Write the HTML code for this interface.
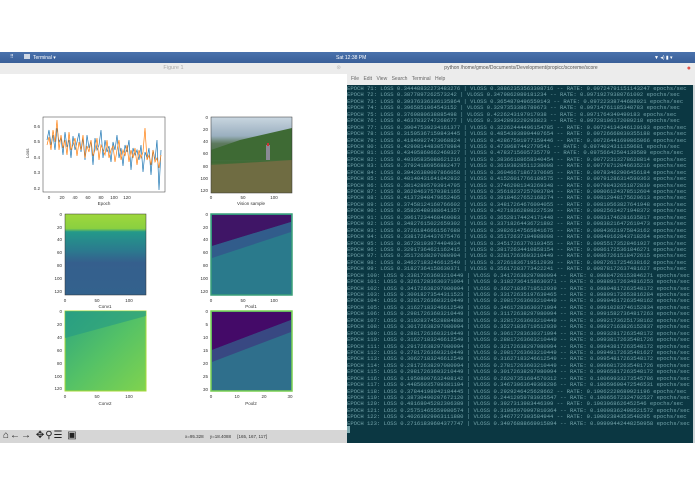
<!DOCTYPE html>
<html><head><meta charset="utf-8"><style>
*{margin:0;padding:0;box-sizing:border-box}
body{width:695px;height:494px;background:#fff;position:relative;overflow:hidden;font-family:"Liberation Sans",sans-serif}
.abs{position:absolute}
#topbar{left:0;top:52px;width:695px;height:11px;background:linear-gradient(#4a72ad,#3a5f98);color:#fff;font-size:5px}
#figtitle{left:0;top:63px;width:347px;height:11px;background:#ececec;color:#aaa;font-size:5.5px;text-align:center;line-height:11px}
#fig{left:0;top:74px;width:345px;height:356px;background:#fff}
#tb{left:0;top:430px;width:347px;height:13px;background:#d6d6d6;font-size:4.5px;color:#333}
#termtitle{left:347px;top:63px;width:348px;height:11px;background:#ececec;color:#555;font-size:5px;text-align:center;line-height:11px}
#menu{left:347px;top:74px;width:348px;height:11px;background:#ececec;color:#666;font-size:5px;line-height:11px;padding-left:4px;word-spacing:3px}
#term{left:347px;top:85px;width:346px;height:358px;background:#0b3742;color:#73a3aa;font-family:"Liberation Mono",monospace;font-size:5.55px;line-height:6.44px;white-space:pre;overflow:hidden;padding-top:1px}
</style></head><body>
<div id="topbar" class="abs"><span style="position:absolute;left:10px;top:2px">⠿</span><span style="position:absolute;left:24px;top:2px;width:6px;height:5px;background:#cfd8e6"></span><span style="position:absolute;left:33px;top:3px">Terminal ▾</span><span style="position:absolute;left:336px;top:3px">Sat 12:38 PM</span><span style="position:absolute;left:654px;top:3px">▼ ◂) ▮ ▾</span></div>
<div id="figtitle" class="abs">Figure 1<span style="position:absolute;right:6px;color:#bbb">⊗</span></div>
<div id="termtitle" class="abs">python /home/gmoe/Documents/Development/propicc/scoreme/score<span style="position:absolute;right:4px;color:#e0524a;font-size:7px">●</span></div>
<div id="menu" class="abs">File Edit View Search Terminal Help</div>
<svg id="fig" class="abs" width="345" height="356" viewBox="0 74 345 356" font-family="Liberation Sans" font-size="4.5" fill="#333">
<defs>
<linearGradient id="c1" x1="0" y1="0" x2="0" y2="1"><stop offset="0" stop-color="#9fd83c"/><stop offset=".18" stop-color="#8ad040"/><stop offset=".22" stop-color="#23998a"/><stop offset=".45" stop-color="#2b7a8e"/><stop offset=".6" stop-color="#355f8d"/><stop offset="1" stop-color="#33628d"/></linearGradient>
<linearGradient id="c2" x1="0" y1="0" x2="1" y2="1"><stop offset="0" stop-color="#2fa67e"/><stop offset=".5" stop-color="#55c266"/><stop offset="1" stop-color="#80d34e"/></linearGradient>
<linearGradient id="vs" x1="0" y1="0" x2="0" y2="1"><stop offset="0" stop-color="#c9d6e0"/><stop offset=".25" stop-color="#9aafbf"/><stop offset=".35" stop-color="#5d7a5e"/><stop offset=".6" stop-color="#3f6a35"/><stop offset=".7" stop-color="#7b7a4a"/><stop offset="1" stop-color="#6e6a40"/></linearGradient>
</defs>
<rect x="43" y="117" width="122" height="75" fill="#fff" stroke="#333" stroke-width=".5"/>
<polyline fill="none" stroke="#1f77b4" stroke-width=".7" points="47,140 49,130 51,145 53,135 55,150 57,128 59,142 61,138 63,155 65,132 67,147 69,140 71,158 73,136 75,150 77,142 79,133 81,152 83,138 85,160 87,135 89,148 91,141 93,165 95,138 97,150 99,145 101,130 103,158 105,140 107,152 109,146 111,162 113,142 115,150 117,135 119,158 121,148 123,166 125,145 127,152 129,140 131,170 133,148 135,155 137,150 139,160 141,145 143,172 145,152 147,158 149,148 151,175 153,150 155,160 157,140 159,190 161,150"/>
<polyline fill="none" stroke="#ff7f0e" stroke-width=".7" points="47,145 49,137 51,150 53,130 55,142 57,120 59,150 61,135 63,148 65,140 67,155 69,132 71,150 73,145 75,138 77,156 79,142 81,150 83,135 85,158 87,146 89,152 91,140 93,156 95,150 97,138 99,160 101,145 103,150 105,155 107,140 109,158 111,150 113,146 115,162 117,150 119,140 121,160 123,150 125,156 127,145 129,162 131,150 133,158 135,148 137,165 139,150 141,158 143,152 145,128 147,160 149,155 151,165 153,150 155,162 157,158 159,168 161,155"/>
<text x="40" y="128" text-anchor="end">0.6</text><text x="40" y="143" text-anchor="end">0.5</text><text x="40" y="159" text-anchor="end">0.4</text><text x="40" y="174" text-anchor="end">0.3</text><text x="40" y="190" text-anchor="end">0.2</text>
<text x="29" y="158" transform="rotate(-90 29 158)">Loss</text>
<text x="49" y="199" text-anchor="middle">0</text><text x="62" y="199" text-anchor="middle">20</text><text x="75" y="199" text-anchor="middle">40</text><text x="88" y="199" text-anchor="middle">60</text><text x="101" y="199" text-anchor="middle">80</text><text x="114" y="199" text-anchor="middle">100</text><text x="127" y="199" text-anchor="middle">120</text>
<text x="104" y="205" text-anchor="middle">Epoch</text>
<rect x="211" y="117" width="81" height="76" fill="url(#vs)"/>
<path d="M211,150 L240,140 L292,128 L292,160 L211,160Z" fill="#3e6a34"/>
<path d="M211,165 L292,160 L292,193 L211,193Z" fill="#6f6c42"/>
<rect x="266" y="145" width="4" height="15" fill="#8a8a95"/>
<rect x="267" y="143" width="2" height="3" fill="#c33"/>
<rect x="211" y="117" width="81" height="76" fill="none" stroke="#333" stroke-width=".5"/>
<text x="208" y="119" text-anchor="end">0</text><text x="208" y="131" text-anchor="end">20</text><text x="208" y="143" text-anchor="end">40</text><text x="208" y="155" text-anchor="end">60</text><text x="208" y="168" text-anchor="end">80</text><text x="208" y="180" text-anchor="end">100</text><text x="208" y="192" text-anchor="end">120</text>
<text x="211" y="199" text-anchor="middle">0</text><text x="243" y="199" text-anchor="middle">50</text><text x="274" y="199" text-anchor="middle">100</text>
<text x="251" y="205" text-anchor="middle">Vision sample</text>
<rect x="65" y="214" width="81" height="81" fill="url(#c1)" stroke="#333" stroke-width=".5"/>
<text x="62" y="216" text-anchor="end">0</text><text x="62" y="229" text-anchor="end">20</text><text x="62" y="241" text-anchor="end">40</text><text x="62" y="254" text-anchor="end">60</text><text x="62" y="267" text-anchor="end">80</text><text x="62" y="280" text-anchor="end">100</text><text x="62" y="293" text-anchor="end">120</text>
<text x="65" y="302" text-anchor="middle">0</text><text x="97" y="302" text-anchor="middle">50</text><text x="129" y="302" text-anchor="middle">100</text>
<text x="105" y="308" text-anchor="middle">Conv1</text>
<rect x="211" y="214" width="81" height="81" fill="#2a7a8c" stroke="#3aa07a" stroke-width="1.5"/>
<path d="M212,215 L291,215 L291,222 L212,246Z" fill="#3f1566"/>
<path d="M212,246 L291,222 L291,232 L212,258Z" fill="#34508a" opacity=".7"/>
<text x="208" y="216" text-anchor="end">0</text><text x="208" y="229" text-anchor="end">20</text><text x="208" y="241" text-anchor="end">40</text><text x="208" y="254" text-anchor="end">60</text><text x="208" y="267" text-anchor="end">80</text><text x="208" y="280" text-anchor="end">100</text><text x="208" y="293" text-anchor="end">120</text>
<text x="211" y="302" text-anchor="middle">0</text><text x="243" y="302" text-anchor="middle">50</text><text x="274" y="302" text-anchor="middle">100</text>
<text x="251" y="308" text-anchor="middle">Pool1</text>
<rect x="65" y="311" width="81" height="80" fill="url(#c2)" stroke="#a7d93a" stroke-width="1"/>
<path d="M65,311 L146,311 L146,316 L65,338Z" fill="#249a86" opacity=".6"/>
<text x="62" y="313" text-anchor="end">0</text><text x="62" y="326" text-anchor="end">20</text><text x="62" y="339" text-anchor="end">40</text><text x="62" y="352" text-anchor="end">60</text><text x="62" y="365" text-anchor="end">80</text><text x="62" y="378" text-anchor="end">100</text><text x="62" y="390" text-anchor="end">120</text>
<text x="65" y="398" text-anchor="middle">0</text><text x="97" y="398" text-anchor="middle">50</text><text x="129" y="398" text-anchor="middle">100</text>
<text x="105" y="405" text-anchor="middle">Conv2</text>
<rect x="211" y="311" width="81" height="80" fill="#2f6f8c" stroke="#7ad151" stroke-width="1.5"/>
<path d="M212,312 L291,312 L291,320 L212,350Z" fill="#440a68"/>
<path d="M212,350 L291,320 L291,332 L212,362Z" fill="#3b3f80" opacity=".8"/>
<text x="208" y="313" text-anchor="end">0</text><text x="208" y="326" text-anchor="end">5</text><text x="208" y="339" text-anchor="end">10</text><text x="208" y="352" text-anchor="end">15</text><text x="208" y="365" text-anchor="end">20</text><text x="208" y="378" text-anchor="end">25</text><text x="208" y="391" text-anchor="end">30</text>
<text x="211" y="398" text-anchor="middle">0</text><text x="237" y="398" text-anchor="middle">10</text><text x="264" y="398" text-anchor="middle">20</text><text x="290" y="398" text-anchor="middle">30</text>
<text x="251" y="405" text-anchor="middle">Pool2</text>
</svg>
<div id="tb" class="abs"><span style="position:absolute;left:3px;top:0px;font-size:10px;color:#222;letter-spacing:1px">⌂←→ ✥⚲☰ ▣</span><span style="position:absolute;left:185px;top:4px">x=95.328&nbsp;&nbsp;&nbsp;&nbsp; y=18.4088&nbsp;&nbsp;&nbsp;&nbsp; [165, 167, 117]</span></div>
<div id="term" class="abs">EPOCH 71: LOSS 0.34448832273483276 | VLOSS 0.38862353563308716 -- RATE: 0.09724791151143247 epochs/sec
EPOCH 72: LOSS 0.3877897262573242 | VLOSS 0.3479862089181234 -- RATE: 0.09719279380761092 epochs/sec
EPOCH 73: LOSS 0.39376336336135864 | VLOSS 0.3654870496559143 -- RATE: 0.09722338744688921 epochs/sec
EPOCH 74: LOSS 0.3965851064543152 | VLOSS 0.3297353386789673 -- RATE: 0.09714761185348783 epochs/sec
EPOCH 75: LOSS 0.3769880638885498 | VLOSS 0.4226243197917938 -- RATE: 0.0971764349499183 epochs/sec
EPOCH 76: LOSS 0.4637832747268677 | VLOSS 0.3342893229293823 -- RATE: 0.09728106172089218 epochs/sec
EPOCH 77: LOSS 0.39047539234161377 | VLOSS 0.32262444496154785 -- RATE: 0.09724134346120193 epochs/sec
EPOCH 78: LOSS 0.31505367159843445 | VLOSS 0.48543938994407654 -- RATE: 0.09726668030355188 epochs/sec
EPOCH 79: LOSS 0.41849927473068824 | VLOSS 0.42867591977159446 -- RATE: 0.09726441699865066 epochs/sec
EPOCH 80: LOSS 0.42998144830578984 | VLOSS 0.4739687442779541 -- RATE: 0.0974024311159681 epochs/sec
EPOCH 81: LOSS 0.43405860662460327 | VLOSS 0.4783715605735779 -- RATE: 0.09756642504139589 epochs/sec
EPOCH 82: LOSS 0.40305835088621216 | VLOSS 0.38366188658340454 -- RATE: 0.09772313278628814 epochs/sec
EPOCH 83: LOSS 0.37924186956882477 | VLOSS 0.36193828511238098 -- RATE: 0.09778712046635216 epochs/sec
EPOCH 84: LOSS 0.39426380097866058 | VLOSS 0.36046671867370605 -- RATE: 0.09783462906456184 epochs/sec
EPOCH 85: LOSS 0.40140431641042932 | VLOSS 0.41526017766189575 -- RATE: 0.09791286314590363 epochs/sec
EPOCH 86: LOSS 0.38142895793914795 | VLOSS 0.37462981343269348 -- RATE: 0.09798432651872839 epochs/sec
EPOCH 87: LOSS 0.36284637570381165 | VLOSS 0.35618237257003784 -- RATE: 0.09806124378512604 epochs/sec
EPOCH 88: LOSS 0.41372948479652405 | VLOSS 0.39184627652168274 -- RATE: 0.09812948175620613 epochs/sec
EPOCH 89: LOSS 0.37458124160766602 | VLOSS 0.34817264676094055 -- RATE: 0.09819563827641948 epochs/sec
EPOCH 90: LOSS 0.35826480388641357 | VLOSS 0.42718362808227539 -- RATE: 0.09825614271948372 epochs/sec
EPOCH 91: LOSS 0.39617234468460083 | VLOSS 0.36528174424171448 -- RATE: 0.09831746281635817 epochs/sec
EPOCH 92: LOSS 0.34827615022659302 | VLOSS 0.33718264436721802 -- RATE: 0.09838216472619473 epochs/sec
EPOCH 93: LOSS 0.37261846661567688 | VLOSS 0.39826147565841675 -- RATE: 0.09843621975843162 epochs/sec
EPOCH 94: LOSS 0.33817264437675476 | VLOSS 0.35172637104988098 -- RATE: 0.09849162843718264 epochs/sec
EPOCH 95: LOSS 0.36728193974494934 | VLOSS 0.34517263770103455 -- RATE: 0.09855173528461927 epochs/sec
EPOCH 96: LOSS 0.32917364621162415 | VLOSS 0.38172634410858154 -- RATE: 0.09861725361846271 epochs/sec
EPOCH 97: LOSS 0.35172638297080994 | VLOSS 0.32817263603210449 -- RATE: 0.09867261518472615 epochs/sec
EPOCH 98: LOSS 0.34627183246612549 | VLOSS 0.37261836719512939 -- RATE: 0.09872617254638162 epochs/sec
EPOCH 99: LOSS 0.31827364158630371 | VLOSS 0.35617283773422241 -- RATE: 0.09878172637481627 epochs/sec
EPOCH 100: LOSS 0.33817263603210449 | VLOSS 0.34172638297080994 -- RATE: 0.09884726153846271 epochs/sec
EPOCH 101: LOSS 0.32617283630371094 | VLOSS 0.31827364158630371 -- RATE: 0.09889172634816253 epochs/sec
EPOCH 102: LOSS 0.34172638297080994 | VLOSS 0.36271836719512939 -- RATE: 0.09894817263548172 epochs/sec
EPOCH 103: LOSS 0.30918273544311523 | VLOSS 0.33172635197639465 -- RATE: 0.09899172653816284 epochs/sec
EPOCH 104: LOSS 0.32817263603210449 | VLOSS 0.29817263603210449 -- RATE: 0.09904617263548162 epochs/sec
EPOCH 105: LOSS 0.31627183246612549 | VLOSS 0.34617283630371094 -- RATE: 0.09910283746152834 epochs/sec
EPOCH 106: LOSS 0.29817263603210449 | VLOSS 0.31172638297080994 -- RATE: 0.09915827364817263 epochs/sec
EPOCH 107: LOSS 0.31928374528884888 | VLOSS 0.32817263603210449 -- RATE: 0.09921736251738162 epochs/sec
EPOCH 108: LOSS 0.30172638297080994 | VLOSS 0.35271836719512939 -- RATE: 0.09927163826152837 epochs/sec
EPOCH 109: LOSS 0.28817263603210449 | VLOSS 0.30617283630371094 -- RATE: 0.09932817263548172 epochs/sec
EPOCH 110: LOSS 0.31627183246612549 | VLOSS 0.28817263603210449 -- RATE: 0.09938172635481726 epochs/sec
EPOCH 111: LOSS 0.29172638297080994 | VLOSS 0.32172638297080994 -- RATE: 0.09943817263548172 epochs/sec
EPOCH 112: LOSS 0.27817263603210449 | VLOSS 0.29817263603210449 -- RATE: 0.09949172635481627 epochs/sec
EPOCH 113: LOSS 0.30627183246612549 | VLOSS 0.31627183246612549 -- RATE: 0.09954817263548172 epochs/sec
EPOCH 114: LOSS 0.28172638297080994 | VLOSS 0.27817263603210449 -- RATE: 0.09960172635481726 epochs/sec
EPOCH 115: LOSS 0.29817263603210449 | VLOSS 0.30172638297080994 -- RATE: 0.09965817263548172 epochs/sec
EPOCH 116: LOSS 0.19508097632408142 | VLOSS 0.26207351684570312 -- RATE: 0.10069933273545786 epochs/sec
EPOCH 117: LOSS 0.44856035709381104 | VLOSS 0.34673063649368286 -- RATE: 0.10059690472546531 epochs/sec
EPOCH 118: LOSS 0.37844198942184445 | VLOSS 0.2929246425628662 -- RATE: 0.10062228689921196 epochs/sec
EPOCH 119: LOSS 0.38730490207672120 | VLOSS 0.24412059783935547 -- RATE: 0.10065672324792527 epochs/sec
EPOCH 120: LOSS 0.48168045282306389 | VLOSS 0.3927313983446399 -- RATE: 0.1003068626452546 epochs/sec
EPOCH 121: LOSS 0.25751465559980574 | VLOSS 0.31085970997810364 -- RATE: 0.10008362498521572 epochs/sec
EPOCH 122: LOSS 0.40263929963111880 | VLOSS 0.3467727303584944 -- RATE: 0.10002384353548295 epochs/sec
EPOCH 123: LOSS 0.27161839604377747 | VLOSS 0.34076888669915894 -- RATE: 0.09999442448250958 epochs/sec
<span style="background:#7eaab0"> </span></div>
<div class="abs" style="left:693px;top:85px;width:2px;height:358px;background:#cfd6d8"></div>
</body></html>
